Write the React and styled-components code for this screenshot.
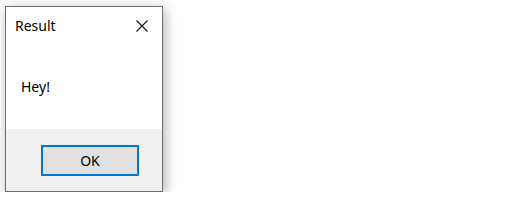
import React from 'react'
import styled, { createGlobalStyle } from 'styled-components'

const GlobalStyle = createGlobalStyle`
  html, body {
    margin: 0;
    padding: 0;
    background: #ffffff;
  }
  body {
    font-family: "Noto Sans", "Open Sans", sans-serif;
    color: #000;
  }
`

const Page = styled.div`
  padding: 6px 0 0 5px;
`

const Window = styled.div`
  box-sizing: border-box;
  width: 158px;
  height: 186px;
  display: flex;
  flex-direction: column;
  background: #fff;
  border: 1px solid #6f6f6f;
  box-shadow: 2px 3px 12px rgba(0, 0, 0, 0.32);
`

const TitleBar = styled.div`
  height: 38px;
  display: flex;
  align-items: center;
  justify-content: space-between;
  padding-left: 9px;
`

const Title = styled.span`
  font-size: 14px;
  line-height: 1;
`

const CloseButton = styled.button`
  width: 41px;
  height: 100%;
  border: 0;
  padding: 0;
  background: transparent;
  display: flex;
  align-items: center;
  justify-content: center;
`

const Body = styled.div`
  flex: 1;
  display: flex;
  align-items: center;
  padding-left: 15px;
  padding-bottom: 1px;
`

const Message = styled.span`
  font-size: 14px;
  line-height: 1;
`

const Footer = styled.div`
  height: 62px;
  background: #f0f0f0;
  display: flex;
  justify-content: flex-end;
  align-items: flex-start;
  padding: 16px 23px 0 0;
  box-sizing: border-box;
`

const Button = styled.button`
  box-sizing: border-box;
  width: 98px;
  height: 31px;
  border: 2px solid #0078d7;
  background: #e1e1e1;
  font-family: inherit;
  font-size: 14px;
  color: #000;
  padding: 0;
`

const CloseIcon = () => (
  <svg width="12" height="12" viewBox="0 0 12 12">
    <path d="M0.5 0.5 L11.5 11.5 M11.5 0.5 L0.5 11.5" stroke="#111" strokeWidth="1.1" fill="none" />
  </svg>
)

export default function App() {
  return (
    <>
      <GlobalStyle />
      <Page>
        <Window>
          <TitleBar>
            <Title>Result</Title>
            <CloseButton aria-label="Close">
              <CloseIcon />
            </CloseButton>
          </TitleBar>
          <Body>
            <Message>Hey!</Message>
          </Body>
          <Footer>
            <Button>OK</Button>
          </Footer>
        </Window>
      </Page>
    </>
  )
}
